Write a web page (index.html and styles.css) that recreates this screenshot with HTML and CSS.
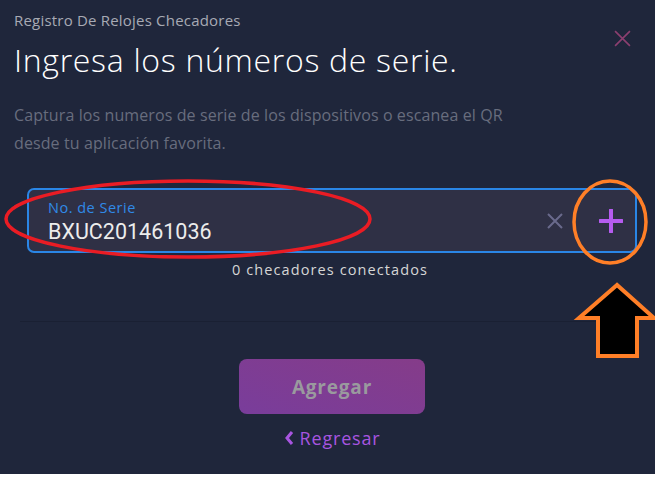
FILE: index.html
```html
<!DOCTYPE html>
<html lang="es">
<head>
    <meta charset="UTF-8">
    <title>Registro De Relojes Checadores</title>
    <link rel="stylesheet" href="styles.css">
</head>
<body>
    <div class="modal">
        <div class="modal-head">
            <div>
                <p class="eyebrow">Registro De Relojes Checadores</p>
                <h1>Ingresa los números de serie.</h1>
            </div>
            <button class="close" type="button" aria-label="Cerrar">
                <svg width="17" height="17" viewBox="0 0 16 16"><path d="M1 1L15 15M15 1L1 15" stroke="#8c3f70" stroke-width="1.5" fill="none"/></svg>
            </button>
        </div>

        <p class="desc">Captura los numeros de serie de los dispositivos o escanea el QR desde tu aplicación favorita.</p>

        <div class="field">
            <div class="field-text">
                <label for="serie">No. de Serie</label>
                <input type="text" id="serie" value="BXUC201461036">
            </div>
            <button class="clear" type="button" aria-label="Limpiar">
                <svg width="16" height="16" viewBox="0 0 16 16"><path d="M1 1L15 15M15 1L1 15" stroke="#6a6a8c" stroke-width="2" fill="none"/></svg>
            </button>
            <button class="add" type="button" aria-label="Agregar">
                <svg width="24" height="24" viewBox="0 0 24 24"><path d="M12 1V23M1 12H23" stroke="#b65cf0" stroke-width="4" stroke-linecap="round" fill="none"/></svg>
            </button>
        </div>
        <p class="count">0 checadores conectados</p>

        <hr class="divider">

        <div class="actions">
            <button class="primary" type="button">Agregar</button>
            <a class="back" href="#">
                <svg width="10" height="16" viewBox="0 0 10 16"><path d="M8 2L3 8L8 14" stroke="#a855e0" stroke-width="3" fill="none"/></svg>
                Regresar
            </a>
        </div>

        <!-- marcas hechas sobre la captura -->
        <svg class="marks" width="655" height="474" viewBox="0 0 655 474">
            <ellipse cx="188" cy="219" rx="182" ry="38" fill="none" stroke="#ea1c24" stroke-width="3.5"/>
            <ellipse cx="610" cy="222" rx="36" ry="41" fill="none" stroke="#ff7f27" stroke-width="3.5"/>
            <path d="M617 285L579 318H598V356H637V318H654Z" fill="#000" stroke="#ff7f27" stroke-width="4" stroke-linejoin="miter"/>
        </svg>
    </div>
</body>
</html>
```

FILE: styles.css
```css
body {
    margin: 0;
    padding: 0;
    background-color: #ffffff;
    font-family: 'Open Sans', 'Noto Sans', sans-serif;
}

.modal {
    position: relative;
    height: 474px;
    box-sizing: border-box;
    padding: 10px 14px 0 14px;
    background-color: #1f263b;
    overflow: hidden;
}

.modal-head {
    display: flex;
    justify-content: space-between;
    align-items: flex-start;
}

.eyebrow {
    margin: 0;
    font-size: 15px;
    letter-spacing: 0.2px;
    color: #a7aab4;
}

h1 {
    margin: 10px 0 0 0;
    font-size: 32px;
    font-weight: 300;
    letter-spacing: 0.7px;
    color: #ffffff;
    line-height: 40px;
}

.close {
    margin: 20px 10px 0 0;
    background: none;
    border: none;
    padding: 0;
}

.desc {
    margin: 21px 0 0 0;
    max-width: 520px;
    font-size: 16px;
    letter-spacing: 0.1px;
    line-height: 28px;
    color: #686d7e;
}

.field {
    display: flex;
    align-items: center;
    margin: 31px 4px 0 13px;
    height: 65px;
    box-sizing: border-box;
    border: 2px solid #2a86e6;
    border-radius: 7px;
    background-color: #2f3045;
    padding: 0 12px 0 19px;
}

.field-text {
    flex: 1;
    display: flex;
    flex-direction: column;
}

.field label {
    font-size: 14.5px;
    letter-spacing: 0.5px;
    color: #2f8ae8;
}

.field input {
    background: none;
    border: none;
    padding: 0;
    margin-top: 2px;
    font-family: 'Roboto', sans-serif;
    font-size: 21.5px;
    color: #ececec;
    outline: none;
}

.clear, .add {
    background: none;
    border: none;
    padding: 0;
    display: flex;
}

.clear {
    margin-right: 36px;
}

.count {
    margin: 7px 0 0 5px;
    text-align: center;
    font-size: 14.5px;
    letter-spacing: 1.1px;
    color: #d6d6d6;
}

.divider {
    border: none;
    border-top: 1px solid #1a2033;
    margin: 42px 6px 0 6px;
}

.actions {
    display: flex;
    flex-direction: column;
    align-items: center;
    margin: 37px 0 0 9px;
}

.primary {
    width: 186px;
    height: 55px;
    border: none;
    border-radius: 8px;
    background: linear-gradient(20deg, #793d9b, #853c89);
    color: #9a9a9e;
    font-family: 'Open Sans', sans-serif;
    font-size: 19px;
    letter-spacing: 0.8px;
    font-weight: bold;
}

.back {
    margin-top: 12px;
    display: flex;
    align-items: center;
    gap: 6px;
    color: #a855e0;
    font-size: 18px;
    letter-spacing: 0.8px;
    text-decoration: none;
}

.marks {
    position: absolute;
    left: 0;
    top: 0;
    pointer-events: none;
}
```
